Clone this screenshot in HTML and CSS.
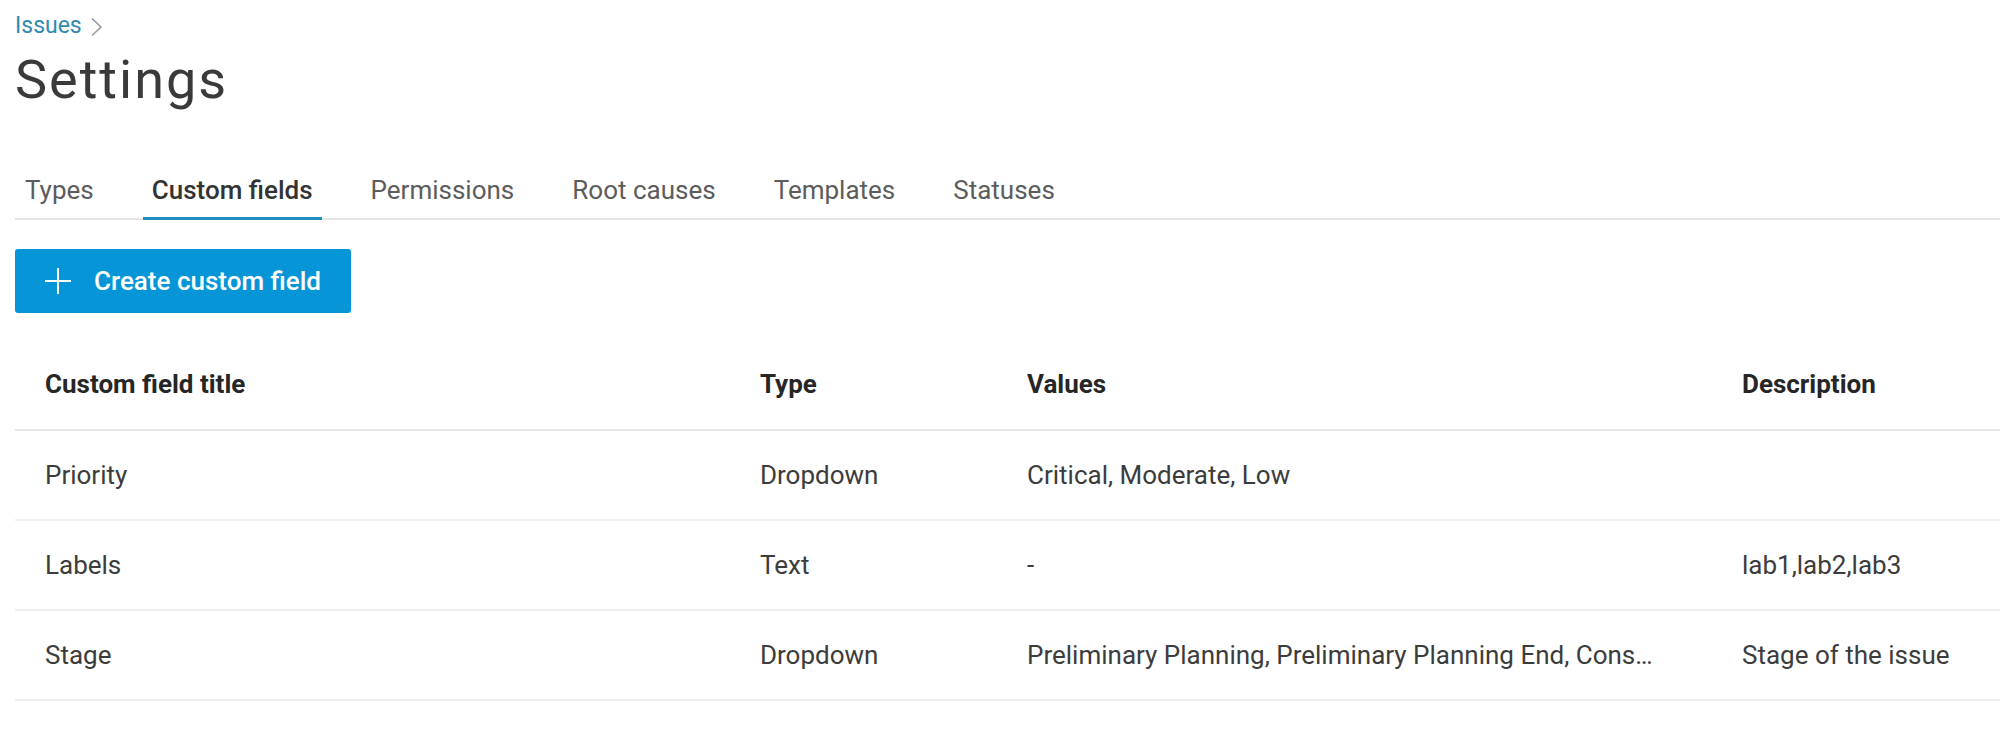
FILE: index.html
```html
<!DOCTYPE html>
<html lang="en">
<head>
<meta charset="utf-8">
<title>Settings</title>
<link rel="stylesheet" href="styles.css">
</head>
<body>
<div class="page">
  <nav class="breadcrumb">
    <a class="crumb" href="#">Issues</a>
    <svg class="chev" width="13" height="20" viewBox="0 0 13 20"><polyline points="2,1.5 11,10 2,18.5" fill="none" stroke="#9a9a9a" stroke-width="1.6"/></svg>
  </nav>
  <h1 class="title">Settings</h1>

  <div class="tabs">
    <div class="tab">Types</div>
    <div class="tab active">Custom fields</div>
    <div class="tab">Permissions</div>
    <div class="tab">Root causes</div>
    <div class="tab">Templates</div>
    <div class="tab">Statuses</div>
  </div>

  <div class="toolbar">
    <button class="btn-primary">
      <svg width="26" height="26" viewBox="0 0 26 26"><line x1="13" y1="0" x2="13" y2="26" stroke="#fff" stroke-width="2"/><line x1="0" y1="13" x2="26" y2="13" stroke="#fff" stroke-width="2"/></svg>
      <span>Create custom field</span>
    </button>
  </div>

  <div class="table">
    <div class="row head">
      <div class="cell">Custom field title</div>
      <div class="cell">Type</div>
      <div class="cell">Values</div>
      <div class="cell">Description</div>
    </div>
    <div class="row">
      <div class="cell">Priority</div>
      <div class="cell">Dropdown</div>
      <div class="cell">Critical, Moderate, Low</div>
      <div class="cell"></div>
    </div>
    <div class="row">
      <div class="cell">Labels</div>
      <div class="cell">Text</div>
      <div class="cell">-</div>
      <div class="cell">lab1,lab2,lab3</div>
    </div>
    <div class="row">
      <div class="cell">Stage</div>
      <div class="cell">Dropdown</div>
      <div class="cell">Preliminary Planning, Preliminary Planning End, Cons…</div>
      <div class="cell">Stage of the issue</div>
    </div>
  </div>
</div>
</body>
</html>
```

FILE: styles.css
```css
html, body {
  margin: 0;
  padding: 0;
  background: #ffffff;
}

body {
  font-family: Roboto, "Liberation Sans", sans-serif;
  color: #3c3c3c;
  overflow: hidden;
}

.page {
  padding-left: 15px;
}

.breadcrumb {
  display: flex;
  align-items: center;
  gap: 8px;
  padding-top: 11px;
  height: 30px;
  font-size: 23px;
  line-height: 30px;
}

.crumb {
  color: #3189b0;
  text-decoration: none;
}

.chev {
  display: block;
  margin-top: 1px;
}

.title {
  margin: 7px 0 0 0;
  font-size: 54px;
  line-height: 64px;
  font-weight: 400;
  letter-spacing: 2px;
  color: #3a3a3a;
}

.tabs {
  display: flex;
  gap: 40px;
  margin-top: 60px;
  border-bottom: 2px solid #e4e4e4;
}

.tab {
  padding: 0 9px 9px 9px;
  margin-bottom: -2px;
  font-size: 26px;
  line-height: 36px;
  color: #5c5c5c;
  border-bottom: 3px solid transparent;
}

.tab:first-child {
  padding-left: 10px;
}

.tab.active {
  color: #333333;
  font-weight: 500;
  border-bottom-color: #1d8fc0;
}

.toolbar {
  margin-top: 29px;
  display: flex;
}

.btn-primary {
  display: inline-flex;
  align-items: center;
  gap: 23px;
  height: 64px;
  padding: 0 30px;
  border: none;
  border-radius: 3px;
  background: #0696d7;
  color: #ffffff;
  font-family: Roboto, "Liberation Sans", sans-serif;
  font-size: 26px;
  font-weight: 500;
}

.btn-primary svg {
  display: block;
}

.table {
  margin-top: 25px;
}

.row {
  display: grid;
  grid-template-columns: 715px 267px 715px 1fr;
  height: 88px;
  border-bottom: 2px solid #eeeeee;
  align-items: center;
  font-size: 26px;
  color: #3c3c3c;
}

.row.head {
  height: 91px;
  border-bottom: 2px solid #e6e6e6;
  font-weight: 700;
  color: #262626;
}

.cell {
  padding: 0 30px;
  white-space: nowrap;
  overflow: hidden;
}
```
